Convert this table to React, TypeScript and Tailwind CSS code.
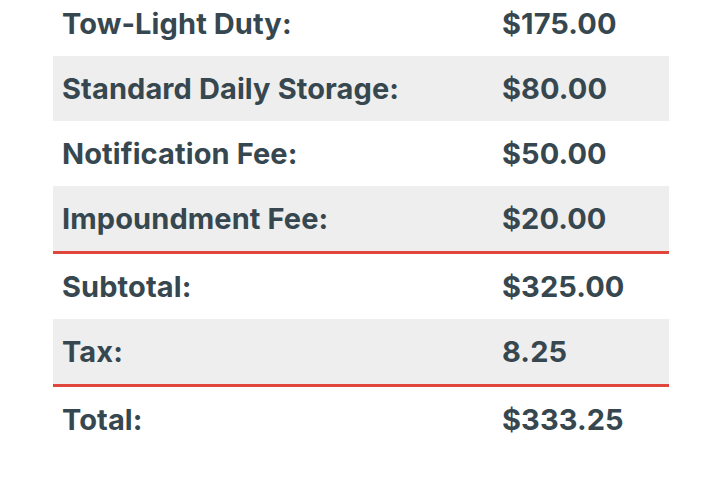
const rows: { label: string; value: string; shaded?: boolean; rule?: boolean }[] = [
  { label: "Tow-Light Duty:", value: "$175.00" },
  { label: "Standard Daily Storage:", value: "$80.00", shaded: true },
  { label: "Notification Fee:", value: "$50.00" },
  { label: "Impoundment Fee:", value: "$20.00", shaded: true, rule: true },
  { label: "Subtotal:", value: "$325.00" },
  { label: "Tax:", value: "8.25", shaded: true, rule: true },
  { label: "Total:", value: "$333.25" },
];

export default function App() {
  return (
    <div className="w-[720px] h-[480px] overflow-hidden bg-white">
      <div className="-mt-[9px] ml-[53px] w-[616px] font-['Inter',sans-serif] font-bold text-[29px] tracking-[0.1px] leading-none text-[#37474f]">
        {rows.map((r) => (
          <div
            key={r.label}
            className={
              (r.shaded ? "bg-[#eeeeee] " : "") +
              (r.rule ? "border-b-[3px] border-[#e0463c] h-[68px] " : "h-[65px] ") +
              "flex items-center pl-[9px]"
            }
          >
            <span className="w-[440px]">{r.label}</span>
            <span>{r.value}</span>
          </div>
        ))}
      </div>
    </div>
  );
}
